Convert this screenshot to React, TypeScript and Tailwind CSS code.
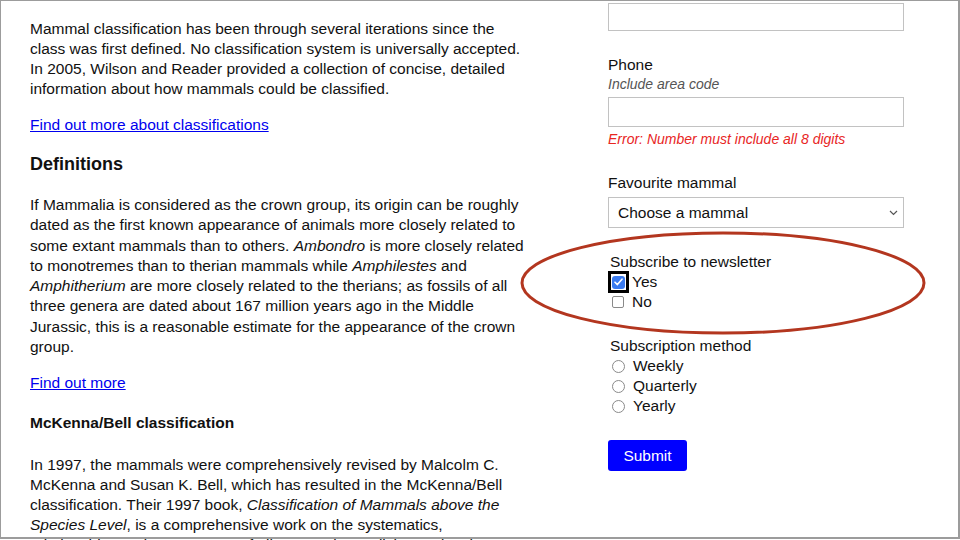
import React from 'react';

const font = "font-['Liberation_Sans',Arial,Helvetica,sans-serif]";

function Checkbox({ checked }: { checked?: boolean }) {
  if (checked) {
    return (
      <span className="flex h-[22px] w-[21px] shrink-0 items-center justify-center border-[3px] border-black">
        <span className="flex h-[13px] w-[13px] items-center justify-center rounded-[3px] bg-[#3a7bf0]">
          <svg width="9" height="8" viewBox="0 0 9 8" fill="none">
            <path d="M1 4.2 L3.4 6.6 L8 1.2" stroke="white" strokeWidth="1.6" strokeLinecap="round" strokeLinejoin="round" />
          </svg>
        </span>
      </span>
    );
  }
  return (
    <span className="ml-[4px] mr-[4px] h-[12px] w-[12px] shrink-0 rounded-[2px] border border-[#8a8a8a] bg-white" />
  );
}

function Radio() {
  return <span className="ml-[4px] mr-[8px] h-[13px] w-[13px] shrink-0 rounded-full border border-[#8a8a8a] bg-white" />;
}

export default function App() {
  return (
    <div className={`relative h-[540px] w-[960px] overflow-hidden bg-white text-[#111] ${font}`}>
      <div className="flex">
        {/* Left: article */}
        <div className="ml-[30px] w-[500px] pt-[19px] text-[15.5px] leading-5">
          <p>
            Mammal classification has been through several iterations since the class was first defined. No
            classification system is universally accepted. In 2005, Wilson and Reader provided a collection of
            concise, detailed information about how mammals could be classified.
          </p>
          <p className="mt-4">
            <a href="#" className="text-[#0000ee] underline">
              Find out more about classifications
            </a>
          </p>
          <h2 className="mt-[18px] text-[18px] font-bold leading-[22px]">Definitions</h2>
          <p className="mt-5 leading-[20.3px]">
            If Mammalia is considered as the crown group, its origin can be roughly dated as the first known
            appearance of animals more closely related to some extant mammals than to others. <i>Ambondro</i> is
            more closely related to monotremes than to therian mammals while <i>Amphilestes</i> and{' '}
            <i>Amphitherium</i> are more closely related to the therians; as fossils of all three genera are dated
            about 167 million years ago in the Middle Jurassic, this is a reasonable estimate for the appearance of
            the crown group.
          </p>
          <p className="mt-4">
            <a href="#" className="text-[#0000ee] underline">
              Find out more
            </a>
          </p>
          <h3 className="mt-5 font-bold">McKenna/Bell classification</h3>
          <p className="mt-[22px]">
            In 1997, the mammals were comprehensively revised by Malcolm C. McKenna and Susan K. Bell, which has
            resulted in the McKenna/Bell classification. Their 1997 book,{' '}
            <i>Classification of Mammals above the Species Level</i>, is a comprehensive work on the systematics,
            relationships and occurrences of all mammal taxa, living and extinct, down to the rank of genus.
          </p>
        </div>

        {/* Right: form */}
        <form className="ml-[78px] flex w-[296px] flex-col text-[15.5px] leading-5">
          <div className="mt-[3px] h-[28px] border border-[#c2c2c2]" />

          <label className="mt-6">Phone</label>
          <span className="text-[14px] italic leading-[18px] text-[#555]">Include area code</span>
          <div className="mt-1 h-[30px] border border-[#c2c2c2]" />
          <span className="mt-[3px] text-[14px] italic leading-[18px] text-[#e8261f]">
            Error: Number must include all 8 digits
          </span>

          <label className="mt-[25px]">Favourite mammal</label>
          <div className="mt-1 flex h-[31px] items-center justify-between border border-[#c2c2c2] pl-[9px] pr-[5px]">
            <span>Choose a mammal</span>
            <svg width="9" height="6" viewBox="0 0 9 6" fill="none">
              <path d="M1 1 L4.5 4.5 L8 1" stroke="#555" strokeWidth="1.2" />
            </svg>
          </div>

          <div className="mt-6 flex flex-col">
            <span className="pl-[2px]">Subscribe to newsletter</span>
            <div className="flex h-5 items-center">
              <Checkbox checked />
              <span className="ml-[3px]">Yes</span>
            </div>
            <div className="flex h-5 items-center">
              <Checkbox />
              <span className="ml-[4px]">No</span>
            </div>
          </div>

          <div className="mt-6 flex flex-col">
            <span className="pl-[2px]">Subscription method</span>
            {['Weekly', 'Quarterly', 'Yearly'].map((o) => (
              <div key={o} className="flex h-5 items-center">
                <Radio />
                <span>{o}</span>
              </div>
            ))}
          </div>

          <button
            type="button"
            className="mt-6 h-[31px] w-[79px] rounded-[3px] bg-[#0000ff] text-[15.5px] text-white"
          >
            Submit
          </button>
        </form>
      </div>

      {/* annotation ellipse */}
      <svg className="pointer-events-none absolute left-[519px] top-[230px]" width="410" height="106" viewBox="0 0 410 106">
        <ellipse cx="204" cy="53" rx="201" ry="50" fill="none" stroke="#b3361f" strokeWidth="3" />
      </svg>

      {/* window frame */}
      <div className="pointer-events-none absolute left-0 top-0 h-[539px] w-[960px] border-b-2 border-l border-r-2 border-t border-[#9c9c9c]" />
    </div>
  );
}
